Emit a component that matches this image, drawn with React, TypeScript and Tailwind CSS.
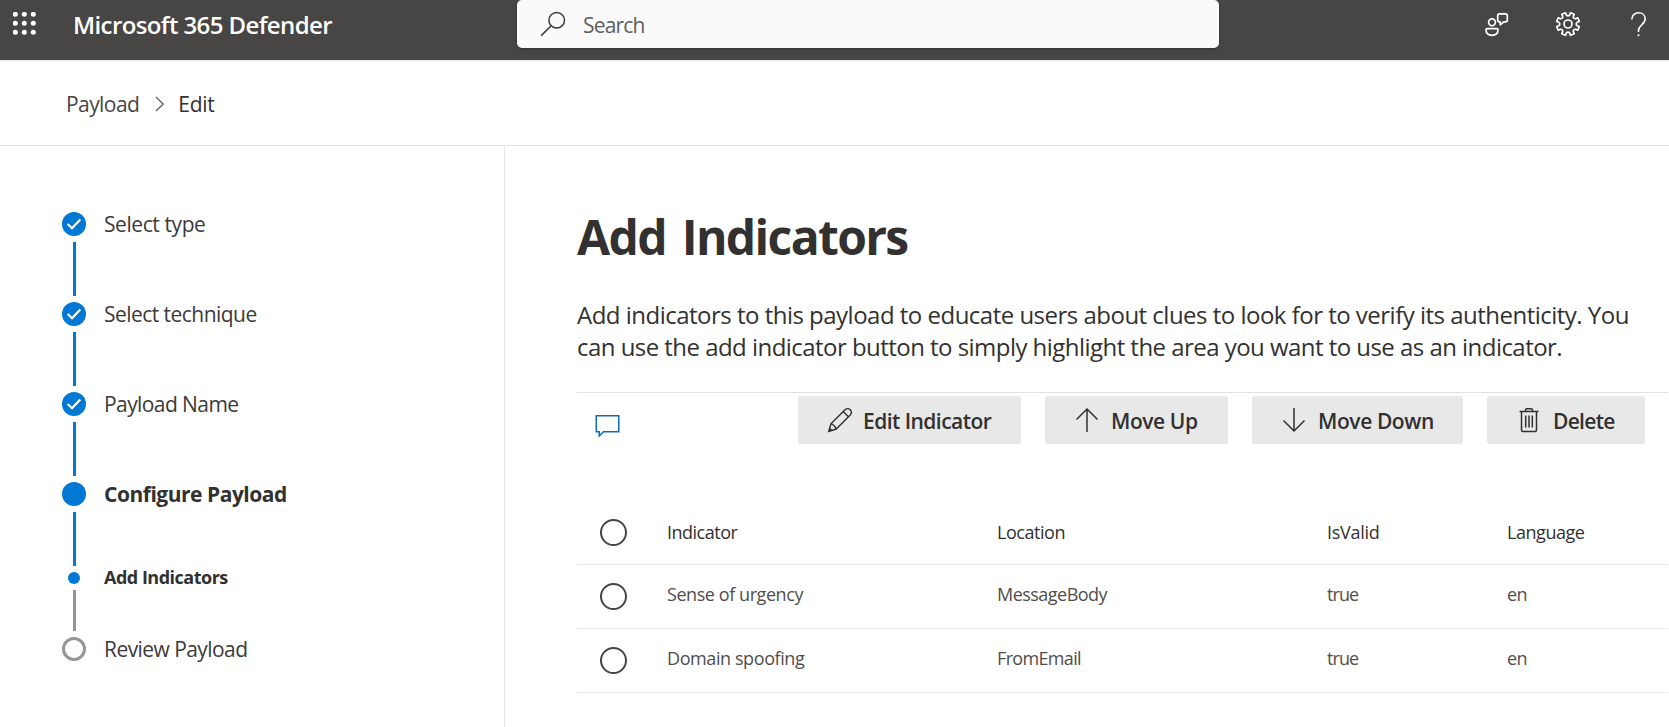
import React from 'react';

function gearPath(cx: number, cy: number) {
  const pt = (r: number, deg: number) => {
    const a = (deg * Math.PI) / 180;
    return `${(cx + r * Math.cos(a)).toFixed(2)} ${(cy + r * Math.sin(a)).toFixed(2)}`;
  };
  let d = '';
  for (let i = 0; i < 8; i++) {
    const t = 22.5 + i * 45;
    d += `${i === 0 ? 'M' : 'L'}${pt(11.6, t - 10)}L${pt(11.6, t + 10)}L${pt(9.3, t + 12)}Q${pt(7.2, t + 22.5)} ${pt(9.3, t + 33)}`;
  }
  return d + 'Z';
}

const GEAR = gearPath(13, 13);

function AppsIcon() {
  const c = [2.3, 11.3, 20.3];
  return (
    <svg width="24" height="24" fill="#fff">
      {c.flatMap((y) => c.map((x) => <circle key={`${x}-${y}`} cx={x} cy={y} r="2.5" />))}
    </svg>
  );
}

function SearchIcon() {
  return (
    <svg width="26" height="26" fill="none" stroke="#3b3a39" strokeWidth="1.5">
      <circle cx="16.7" cy="9.2" r="7.8" />
      <path d="M11.2 14.8L1.2 24.6" />
    </svg>
  );
}

function FeedbackIcon() {
  return (
    <svg width="26" height="26" fill="none" stroke="#fff" strokeWidth="1.7" strokeLinejoin="round">
      <circle cx="8" cy="11.2" r="3.4" />
      <path d="M3.2 17.6H12.8Q14 17.6 14 18.8C14 22.6 11.6 24.3 8 24.3C4.4 24.3 2 22.6 2 18.8Q2 17.6 3.2 17.6Z" />
      <path d="M15.5 2.8H21.5Q23.3 2.8 23.3 4.6V9Q23.3 10.8 21.5 10.8H19.8L16.2 13.8V10.8H15.5Q13.7 10.8 13.7 9V4.6Q13.7 2.8 15.5 2.8Z" />
    </svg>
  );
}

function GearIcon() {
  return (
    <svg width="26" height="26" fill="none" stroke="#fff" strokeWidth="1.7" strokeLinejoin="round">
      <path d={GEAR} />
      <circle cx="13" cy="13" r="4" />
    </svg>
  );
}

function HelpIcon() {
  return (
    <svg width="26" height="26" fill="none" stroke="#fff" strokeWidth="1.6">
      <path d="M5.8 8.5C5.8 4.5 8.8 1.8 12.5 1.8C16.5 1.8 19.2 4.4 19.2 8C19.2 13.3 12.5 14.2 12.5 19.5V21" />
      <path d="M12.5 23.3V25.2" strokeWidth="1.8" />
    </svg>
  );
}

function PencilIcon() {
  return (
    <svg width="26" height="26" fill="none" stroke="#323130" strokeWidth="1.4" strokeLinejoin="round">
      <path d="M1.6 24.5L4 16.7L18.3 2.5Q20.9 0.6 23.3 2.7Q25.4 5.1 23.5 7.7L9.3 22Z" />
      <path d="M4 16.7Q7.7 18 9.3 22M16.2 4.6L21.4 9.8M2.6 21.3L4.8 23.5" />
    </svg>
  );
}

function ArrowIcon({ down }: { down?: boolean }) {
  return (
    <svg width="24" height="26" fill="none" stroke="#323130" strokeWidth="1.5">
      {down ? <path d="M12 1V24.5M1.5 13.5L12 24L22.5 13.5" /> : <path d="M12 25V1.5M1.5 12.5L12 2L22.5 12.5" />}
    </svg>
  );
}

function TrashIcon() {
  return (
    <svg width="20" height="26" fill="none" stroke="#323130" strokeWidth="1.5">
      <path d="M0.5 4.5H19.5M6.5 4.5V3Q6.5 1.75 7.8 1.75H12.2Q13.5 1.75 13.5 3V4.5M2.5 4.5V23Q2.5 24.5 4 24.5H16Q17.5 24.5 17.5 23V4.5M6.7 8.5V20.5M10 8.5V20.5M13.3 8.5V20.5" />
    </svg>
  );
}

function Check() {
  return (
    <svg width="24" height="24" fill="none" stroke="#fff" strokeWidth="2.3">
      <path d="M5.7 12L10 16.2L18.3 7.5" />
    </svg>
  );
}

const connector = 'my-1.5 ml-[11px] w-[3px]';

function Step({ label, tracking }: { label: string; tracking: string }) {
  return (
    <>
      <li className="flex h-6 items-center gap-[18px]">
        <span className="h-6 w-6 shrink-0 rounded-full bg-[#0078d4]">
          <Check />
        </span>
        <span className={`pt-0.5 ${tracking}`}>{label}</span>
      </li>
      <li className={`${connector} h-[54px] bg-[#0078d4]`} />
    </>
  );
}

function Action({ icon, label, box, text }: { icon: React.ReactNode; label: string; box: string; text: string }) {
  return (
    <button className={`flex h-12 items-center rounded-[3px] bg-[#e8e8e8] pb-px text-[21px] font-semibold ${box}`}>
      {icon}
      <span className={`pt-1 ${text}`}>{label}</span>
    </button>
  );
}

function Radio() {
  return <span className="ml-[23px] h-[27px] w-[27px] rounded-full border-2 border-[#484644]" />;
}

const GRID = 'grid grid-cols-[90px_330px_330px_180px_1fr] items-center text-[18px]';

export default function App() {
  return (
    <div className="flex h-[727px] w-[1669px] flex-col overflow-hidden bg-white font-['Open_Sans',sans-serif] text-[#323130]">
      <header className="flex h-[61px] shrink-0 items-start border-b border-[#e5e5e5] bg-[#484644]">
        <div className="flex h-12 w-[517px] items-center pl-[13px]">
          <AppsIcon />
          <span className="ml-9 pt-0.5 text-2xl font-semibold tracking-[-0.6px] whitespace-nowrap text-white">Microsoft 365 Defender</span>
        </div>
        <div className="flex h-12 w-[702px] items-center rounded-[5px] bg-[#fafafa] pl-[23px] shadow-[0_1px_3px_rgba(0,0,0,0.3)]">
          <SearchIcon />
          <span className="ml-[17px] pt-[3px] text-[21px] tracking-[-0.8px] text-[#605e5c]">Search</span>
        </div>
        <div className="flex h-12 flex-1 items-center justify-end gap-[45px] pr-[17px]">
          <FeedbackIcon />
          <GearIcon />
          <HelpIcon />
        </div>
      </header>

      <nav className="flex h-[85px] shrink-0 items-center border-b border-[#e5e5e5] pt-0.5 pl-[66px] text-[21px]">
        <span className="pt-0.5 tracking-[-0.57px] text-[#484644]">Payload</span>
        <svg width="10" height="16" fill="none" stroke="#605e5c" strokeWidth="1.3" className="ml-4">
          <path d="M1 1L8.2 8L1 15" />
        </svg>
        <span className="ml-[13px] pt-0.5 tracking-[-0.27px]">Edit</span>
      </nav>

      <div className="flex min-h-0 flex-1">
        <ul className="w-[505px] shrink-0 border-r border-[#e5e5e5] pt-[66px] pl-[62px] text-[21px] whitespace-nowrap text-[#3b3a39]">
          <Step label="Select type" tracking="tracking-[-0.42px]" />
          <Step label="Select technique" tracking="tracking-[-0.54px]" />
          <Step label="Payload Name" tracking="tracking-[-0.58px]" />
          <li className="flex h-6 items-center gap-[18px]">
            <span className="h-6 w-6 rounded-full bg-[#0078d4]" />
            <span className="pt-0.5 font-bold tracking-[-0.48px] text-[#323130]">Configure Payload</span>
          </li>
          <li className={`${connector} h-[54px] bg-[#0078d4]`} />
          <li className="flex h-3 items-center gap-6 pl-1.5">
            <span className="h-3 w-3 rounded-full bg-[#0078d4]" />
            <span className="pb-0.5 text-[18px] font-bold tracking-[-0.5px] text-[#323130]">Add Indicators</span>
          </li>
          <li className={`${connector} h-[41px] bg-[#979593]`} />
          <li className="flex h-6 items-center gap-[18px]">
            <span className="h-6 w-6 rounded-full border-3 border-[#979593]" />
            <span className="pt-0.5 tracking-[-0.56px]">Review Payload</span>
          </li>
        </ul>

        <main className="min-w-0 flex-1 pt-[61px] pr-px pl-[72px]">
          <h1 className="text-5xl leading-[60px] font-bold tracking-[-1.65px] [word-spacing:5px]">Add Indicators</h1>
          <p className="mt-[32px] text-2xl leading-8 whitespace-nowrap">
            <span className="block tracking-[-0.51px]">
              Add indicators to this payload to educate users about clues to look for to verify its authenticity. You
            </span>
            <span className="block tracking-[-0.54px]">
              can use the add indicator button to simply highlight the area you want to use as an indicator.
            </span>
          </p>

          <div className="mt-[29px] flex h-[108px] items-start border-t border-[#e1e1e1] pt-[3px] pr-[23px] whitespace-nowrap">
            <svg width="26" height="24" fill="none" stroke="#0f6cbd" strokeWidth="1.5" className="mt-[18px] ml-[18px]">
              <path d="M1.25 1.75H23.75V17.75H8.5L4.25 22V17.75H1.25Z" />
            </svg>
            <div className="ml-auto flex">
              <Action icon={<PencilIcon />} label="Edit Indicator" box="w-[223px] pl-[29px]" text="ml-[10px] tracking-[-0.55px]" />
              <Action icon={<ArrowIcon />} label="Move Up" box="ml-6 w-[183px] pl-[30px]" text="ml-[12px] tracking-[-0.42px]" />
              <Action icon={<ArrowIcon down />} label="Move Down" box="ml-6 w-[211px] pl-[30px]" text="ml-[12px] tracking-[-0.41px]" />
              <Action icon={<TrashIcon />} label="Delete" box="ml-6 w-[158px] pl-8" text="ml-[14px] tracking-[-0.7px]" />
            </div>
          </div>

          <div className={`${GRID} h-[65px] border-b border-[#e5e5e5]`}>
            <Radio />
            <span className="tracking-[-0.5px]">Indicator</span>
            <span className="tracking-[-0.46px]">Location</span>
            <span className="tracking-[-0.3px]">IsValid</span>
            <span className="tracking-[-0.45px]">Language</span>
          </div>
          <div className={`${GRID} h-16 border-b border-[#ebebeb] text-[#504e4c]`}>
            <Radio />
            <span className="pb-[4px] tracking-[-0.43px]">Sense of urgency</span>
            <span className="pb-[4px] tracking-[-0.52px]">MessageBody</span>
            <span className="pb-[4px] tracking-[-0.9px]">true</span>
            <span className="pb-[4px] tracking-[-0.5px]">en</span>
          </div>
          <div className={`${GRID} h-16 border-b border-[#ebebeb] text-[#504e4c]`}>
            <Radio />
            <span className="pb-[4px] tracking-[-0.41px]">Domain spoofing</span>
            <span className="pb-[4px] tracking-[-0.66px]">FromEmail</span>
            <span className="pb-[4px] tracking-[-0.9px]">true</span>
            <span className="pb-[4px] tracking-[-0.5px]">en</span>
          </div>
        </main>
      </div>
    </div>
  );
}
